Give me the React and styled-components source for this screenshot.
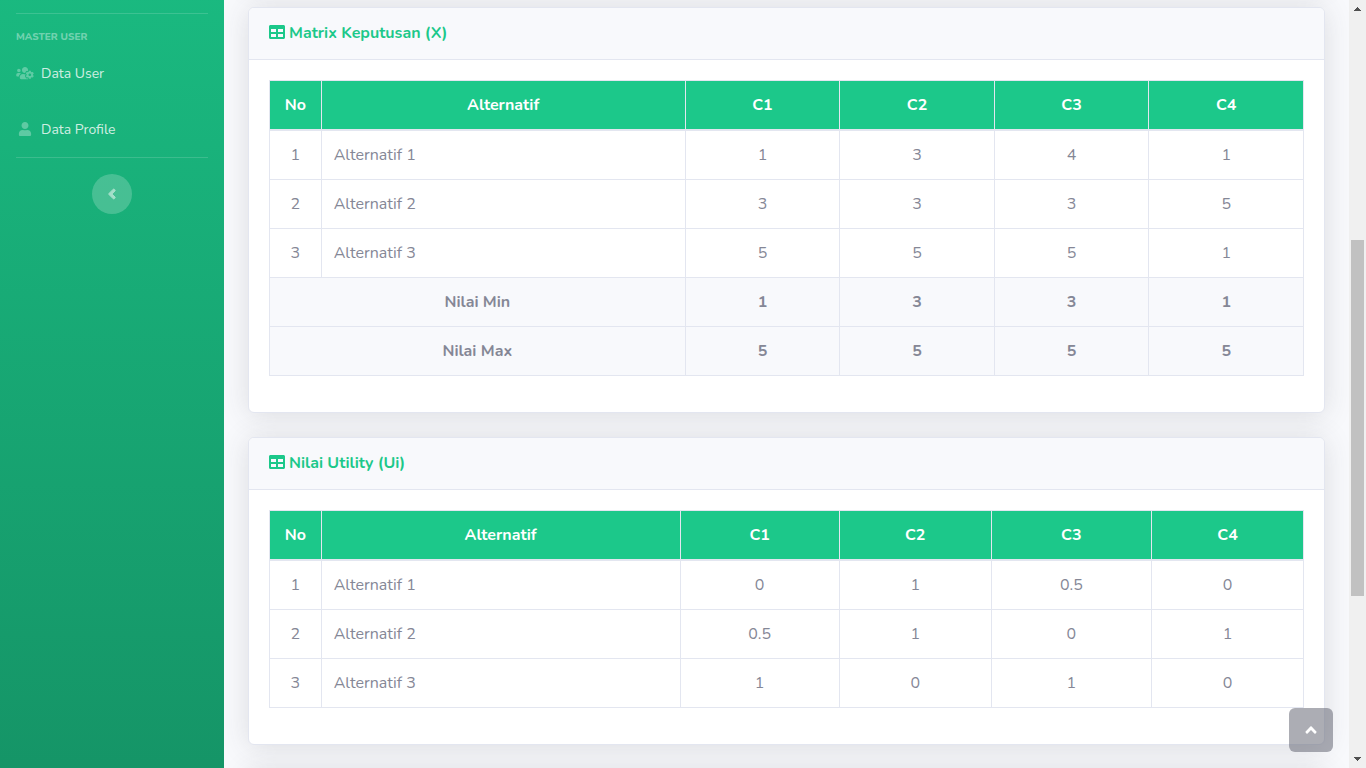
import styled, { createGlobalStyle } from "styled-components";
import { FaAngleLeft, FaAngleUp, FaTable, FaUser, FaUsersCog } from "react-icons/fa";

const criteria = ["C1", "C2", "C3", "C4"]

const matrixRows = [
    { name: "Alternatif 1", values: ["1", "3", "4", "1"] },
    { name: "Alternatif 2", values: ["3", "3", "3", "5"] },
    { name: "Alternatif 3", values: ["5", "5", "5", "1"] },
]

const matrixSummary = [
    { name: "Nilai Min", values: ["1", "3", "3", "1"] },
    { name: "Nilai Max", values: ["5", "5", "5", "5"] },
]

const utilityRows = [
    { name: "Alternatif 1", values: ["0", "1", "0.5", "0"] },
    { name: "Alternatif 2", values: ["0.5", "1", "0", "1"] },
    { name: "Alternatif 3", values: ["1", "0", "1", "0"] },
]

const Sidebar = () => {
    return (
        <SidebarNav>
            <Divider />
            <SidebarHeading>Master User</SidebarHeading>
            <NavLink href="#user"><FaUsersCog />Data User</NavLink>
            <NavLink href="#profile"><FaUser />Data Profile</NavLink>
            <Divider />
            <SidebarToggle type="button" aria-label="Toggle sidebar"><FaAngleLeft /></SidebarToggle>
        </SidebarNav>
    )
}

const ScoreCard = ({title, widths, rows, summary = []}) => {
    return (
        <Card>
            <CardHeader>
                <CardTitle><FaTable /> {title}</CardTitle>
            </CardHeader>
            <CardBody>
                <Table>
                    <colgroup>
                        {widths.map((width, index) => <Col key={index} $width={width} />)}
                    </colgroup>
                    <thead>
                        <tr>
                            <HeadCell scope="col">No</HeadCell>
                            <HeadCell scope="col">Alternatif</HeadCell>
                            {criteria.map(name => <HeadCell scope="col" key={name}>{name}</HeadCell>)}
                        </tr>
                    </thead>
                    <tbody>
                        {rows.map((row, index) => (
                            <tr key={row.name}>
                                <Cell>{index + 1}</Cell>
                                <Cell $align="left">{row.name}</Cell>
                                {row.values.map((value, i) => <Cell key={i}>{value}</Cell>)}
                            </tr>
                        ))}
                        {summary.map(row => (
                            <SummaryRow key={row.name}>
                                <Cell as="th" scope="row" colSpan={2}>{row.name}</Cell>
                                {row.values.map((value, i) => <Cell key={i}>{value}</Cell>)}
                            </SummaryRow>
                        ))}
                    </tbody>
                </Table>
            </CardBody>
        </Card>
    )
}

const Scrollbar = () => {
    return (
        <ScrollRail aria-hidden="true">
            <ScrollArrow viewBox="0 0 17 17"><path d="M8 7h1v1h1v1h1v1h1v1H5v-1h1V9h1V8h1z" /></ScrollArrow>
            <ScrollTrack>
                <ScrollSpace $grow={223} />
                <ScrollThumb />
                <ScrollSpace $grow={155} />
            </ScrollTrack>
            <ScrollArrow viewBox="0 0 17 17"><path d="M5 6h7v1h-1v1h-1v1H9v1H8V9H7V8H6V7H5z" /></ScrollArrow>
        </ScrollRail>
    )
}

const App = () => {
    return (
        <Page>
            <GlobalStyle />
            <Sidebar />
            <Content>
                <PassedCard />
                <ScoreCard
                    title="Matrix Keputusan (X)"
                    widths={["5%", "35.2%", "14.95%", "14.95%", "14.95%", "14.95%"]}
                    rows={matrixRows}
                    summary={matrixSummary}
                />
                <ScoreCard
                    title="Nilai Utility (Ui)"
                    widths={["5%", "34.7%", "15.4%", "14.7%", "15.5%", "14.7%"]}
                    rows={utilityRows}
                />
                <Card />
            </Content>
            <Scrollbar />
            <ScrollTop href="#top" aria-label="Back to top"><FaAngleUp /></ScrollTop>
        </Page>
    )
}

export default App;

const GlobalStyle = createGlobalStyle`
    *, *::before, *::after {
        box-sizing: border-box;
    }

    body {
        margin: 0;
        background: #f8f9fc;
        color: #858796;
        font-family: Nunito, Lato, sans-serif;
        font-size: 16px;
        line-height: 24px;
    }
`

const Page = styled.div`
    display: flex;
    height: 100vh;
    overflow: hidden;
`

const SidebarNav = styled.nav`
    flex: 0 0 224px;
    display: flex;
    flex-direction: column;
    padding-top: 13px;
    background: linear-gradient(180deg, #1cc88a -323px, #13855c 1102px);
`

const Divider = styled.hr`
    flex: none;
    width: auto;
    height: 1px;
    margin: 0 16px;
    border: none;
    background: rgba(255, 255, 255, 0.15);
`

const SidebarHeading = styled.div`
    margin-top: 16px;
    padding: 0 16px;
    color: rgba(255, 255, 255, 0.4);
    font-size: 10px;
    font-weight: 800;
    line-height: 15px;
    text-transform: uppercase;
`

const NavLink = styled.a`
    display: flex;
    align-items: flex-start;
    gap: 7px;
    padding: 17px 16px 15px;
    color: rgba(255, 255, 255, 0.8);
    font-size: 14px;
    text-decoration: none;

    svg {
        width: 18px;
        height: 14px;
        margin-top: 4px;
        color: rgba(255, 255, 255, 0.3);
    }
`

const SidebarToggle = styled.button`
    display: flex;
    align-items: center;
    justify-content: center;
    align-self: center;
    width: 40px;
    height: 40px;
    margin-top: 16px;
    padding: 0;
    border: none;
    border-radius: 50%;
    background: rgba(255, 255, 255, 0.2);
    color: #fff;
    font-size: 16px;
    cursor: pointer;

    svg {
        stroke-width: 32;
        opacity: 0.5;
    }
`

const Content = styled.main`
    flex: 1;
    min-width: 0;
    display: flex;
    flex-direction: column;
    gap: 24px;
    padding: 0 24px;
    overflow: hidden;
`

const Card = styled.section`
    flex: none;
    min-height: 180px;
    border: 1px solid #e3e6f0;
    border-radius: 6px;
    background: #fff;
    box-shadow: 0 2px 28px 0 rgba(58, 59, 69, 0.15);
`

// the card already scrolled out above, only its shadow still shows
const PassedCard = styled(Card)`
    height: 183px;
    margin-top: -200px;
`

const CardHeader = styled.header`
    padding: 16px 20px;
    border-bottom: 1px solid #e3e6f0;
    border-radius: 5px 5px 0 0;
    background: #f8f9fc;
`

const CardTitle = styled.h6`
    display: flex;
    align-items: flex-start;
    gap: 4px;
    margin: 0;
    color: #1cc88a;
    font-size: 16px;
    font-weight: 700;
    line-height: 19px;
`

const CardBody = styled.div`
    padding: 20px 20px 36px;
`

const Table = styled.table`
    width: 100%;
    table-layout: fixed;
    border-collapse: collapse;
    border: 1px solid #e3e6f0;
`

const Col = styled.col`
    width: ${({$width}) => $width};
`

const Cell = styled.td`
    padding: 12px;
    border: 1px solid #e3e6f0;
    text-align: ${({$align}) => $align || "center"};
`

const HeadCell = styled.th`
    padding: 12px;
    border: 1px solid #e3e6f0;
    border-bottom-width: 2px;
    background: #1cc88a;
    color: #fff;
    font-weight: 700;
    text-align: center;
`

const SummaryRow = styled.tr`
    background: #f8f9fc;
    font-weight: 700;
`

const ScrollTop = styled.a`
    position: fixed;
    right: 33px;
    bottom: 16px;
    display: flex;
    align-items: center;
    justify-content: center;
    width: 44px;
    height: 44px;
    border-radius: 6px;
    background: rgba(90, 92, 105, 0.5);
    color: #fff;
    font-size: 18px;
`

const ScrollRail = styled.div`
    flex: 0 0 17px;
    display: flex;
    flex-direction: column;
    background: #f0f0f0;
`

const ScrollArrow = styled.svg`
    flex: none;
    width: 17px;
    height: 17px;
    fill: #505050;
`

const ScrollTrack = styled.div`
    flex: 1;
    display: flex;
    flex-direction: column;
    padding: 0 2px;
`

const ScrollSpace = styled.div`
    flex: ${({$grow}) => $grow} 0 0;
`

const ScrollThumb = styled.div`
    flex: 356 0 0;
    background: #c1c1c1;
`
